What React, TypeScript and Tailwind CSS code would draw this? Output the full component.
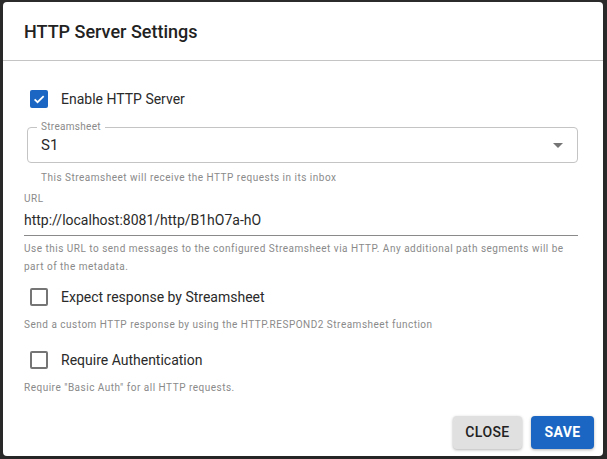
import React from 'react'

const Checkbox = ({ checked }: { checked?: boolean }) =>
  checked ? (
    <div className="w-[18px] h-[18px] rounded-[2px] bg-[#1a66c2] flex items-center justify-center flex-shrink-0">
      <svg width="14" height="14" viewBox="0 0 24 24">
        <path d="M4.5 12.5l5 5L20 7" fill="none" stroke="white" strokeWidth="3" />
      </svg>
    </div>
  ) : (
    <div className="w-[18px] h-[18px] rounded-[2px] border-2 border-[#757575] flex-shrink-0" />
  )

const CheckRow = ({ label, checked, className = '' }: { label: string; checked?: boolean; className?: string }) => (
  <div className={`h-[38px] flex items-center pl-[6px] ${className}`}>
    <Checkbox checked={checked} />
    <span className="ml-[13px] text-[14px] text-[#2a2a2a]">{label}</span>
  </div>
)

const Helper = ({ children, className = '' }: { children: React.ReactNode; className?: string }) => (
  <p className={`text-[10px] leading-[13px] tracking-[0.05em] text-[#8a8a8a] ${className}`}>{children}</p>
)

export default function App() {
  return (
    <div
      className="w-[607px] h-[459px] bg-[#2b2b2b] pt-[2px] pl-[3px] overflow-hidden"
      style={{ fontFamily: 'Roboto, "Liberation Sans", sans-serif' }}
    >
      <div className="w-[600px] h-[454px] bg-white rounded-[4px] flex flex-col shadow-lg">
        {/* HEADER */}
        <div className="h-[59px] px-[21px] flex items-center border-b border-[#c4c4c4]">
          <h1 className="text-[18px] font-medium text-[#222]">HTTP Server Settings</h1>
        </div>

        {/* CONTENT */}
        <div className="pl-[21px] pr-[25px] pt-[19px]">
          <CheckRow label="Enable HTTP Server" checked />

          <div className="ml-[3px] mt-[9px]">
            <div className="relative h-[36px] rounded-[4px] border border-[#c4c4c4] flex items-center px-[13px]">
              <span className="absolute -top-[7px] left-[9px] bg-white px-[4px] text-[10px] leading-[12px] tracking-[0.03em] text-[#8a8a8a]">
                Streamsheet
              </span>
              <span className="flex-1 text-[15px] text-[#2a2a2a]">S1</span>
              <svg width="10" height="5" viewBox="0 0 10 5" className="mr-[1px]">
                <path d="M0 0h10L5 5z" fill="#757575" />
              </svg>
            </div>
            <Helper className="mt-[8px] pl-[14px]">This Streamsheet will receive the HTTP requests in its inbox</Helper>
          </div>

          <div className="mt-[9px]">
            <p className="text-[10px] leading-[12px] tracking-[0.05em] text-[#8a8a8a]">URL</p>
            <div className="mt-[5px] pb-[5px] leading-[20px] text-[14px] text-[#2a2a2a] border-b border-[#8a8a8a]">
              http://localhost:8081/http/B1hO7a-hO
            </div>
            <p className="mt-[4px] text-[10px] leading-[18px] tracking-[0.05em] text-[#8a8a8a]">
              Use this URL to send messages to the configured Streamsheet via HTTP. Any additional path segments will be
              part of the metadata.
            </p>
          </div>

          <CheckRow label="Expect response by Streamsheet" className="mt-[2px]" />
          <Helper className="mt-[2px]">Send a custom HTTP response by using the HTTP.RESPOND2 Streamsheet function</Helper>

          <CheckRow label="Require Authentication" className="mt-[10px]" />
          <Helper className="mt-[2px]">Require "Basic Auth" for all HTTP requests.</Helper>
        </div>

        {/* FOOTER */}
        <div className="mt-auto flex justify-end gap-[9px] pr-[9px] pb-[7px]">
          <button className="w-[69px] h-[33px] rounded-[4px] bg-[#e0e0e0] text-[14px] font-medium tracking-[0.03em] text-[#222] shadow-[0_1px_3px_rgba(0,0,0,0.3)]">
            CLOSE
          </button>
          <button className="w-[63px] h-[33px] rounded-[4px] bg-[#1a66c2] text-[14px] font-bold tracking-[0.03em] text-white shadow-[0_1px_3px_rgba(0,0,0,0.3)]">
            SAVE
          </button>
        </div>
      </div>
    </div>
  )
}
